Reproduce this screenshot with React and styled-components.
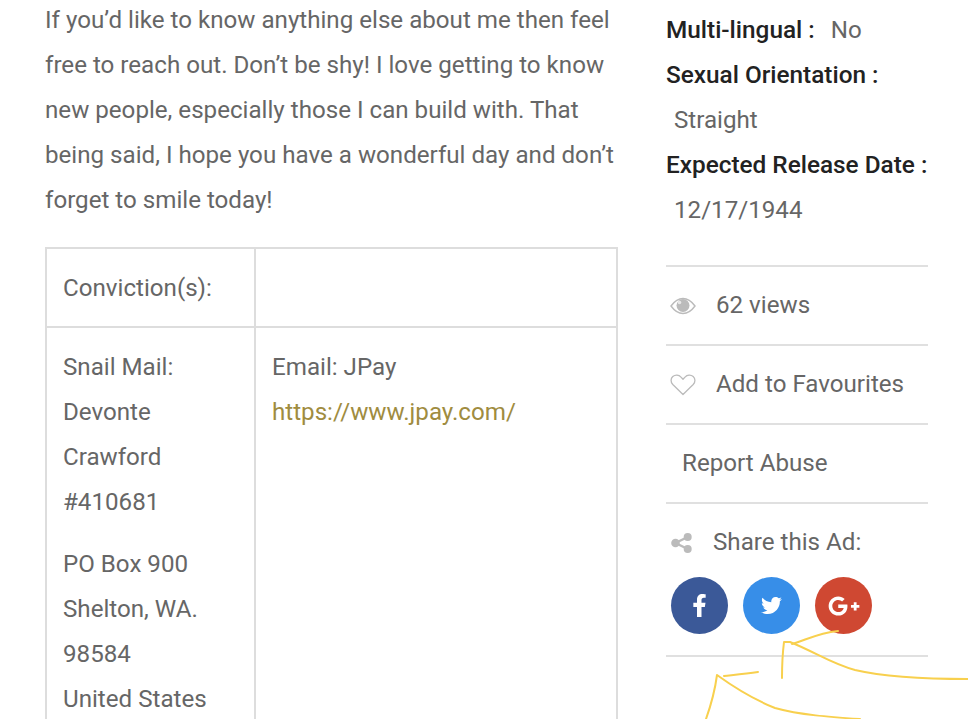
import React from 'react';
import styled, { createGlobalStyle } from 'styled-components';
import { FaFacebookF, FaTwitter, FaGooglePlusG } from 'react-icons/fa';

const GlobalStyle = createGlobalStyle`
  html, body {
    margin: 0;
    padding: 0;
    background: #fff;
    overflow: hidden;
  }
`;

const Page = styled.div`
  position: relative;
  width: 968px;
  height: 719px;
  overflow: hidden;
  display: grid;
  grid-template-columns: 573px 262px;
  column-gap: 48px;
  padding-left: 45px;
  box-sizing: border-box;
  font-family: Roboto, "Liberation Sans", sans-serif;
  font-size: 24.15px;
  line-height: 45px;
  color: #666;
`;

const Main = styled.main`
  margin-top: -2px;
`;

const Intro = styled.p`
  margin: 0 0 24px;
`;

const Table = styled.div`
  display: grid;
  grid-template-columns: 209px 1fr;
  border-top: 2px solid #ddd;
  border-left: 2px solid #ddd;
`;

const Cell = styled.div`
  padding: 17px 16px 15px;
  border-right: 2px solid #ddd;
  border-bottom: 2px solid #ddd;
`;

const Address = styled.p`
  margin: 0 0 17px;
`;

const Link = styled.a`
  color: #a08c3f;
  text-decoration: none;
`;

const Sidebar = styled.aside`
  padding-top: 8px;
`;

const Facts = styled.div`
  padding-bottom: 32px;
`;

const Label = styled.strong`
  color: #222;
  font-size: 24.35px;
  line-height: 1;
  font-weight: 500;
`;

const InlineValue = styled.span`
  margin-left: 16px;
`;

const Value = styled.div`
  padding-left: 8px;
`;

const Row = styled.div`
  display: flex;
  align-items: center;
  height: 77px;
  border-top: 2px solid #e0e0e0;
  padding-left: ${p => p.$inset || 0}px;
`;

const RowIcon = styled.span`
  display: flex;
  justify-content: center;
  width: 34px;
  margin-right: 16px;
  color: #bbb;
`;

const ShareRow = styled(Row)`
  padding-left: 5px;
`;

const ShareIcon = styled.span`
  display: flex;
  width: 22px;
  margin-right: 20px;
`;

const Socials = styled.div`
  display: flex;
  gap: 15px;
  padding-left: 5px;
  margin-top: -4px;
  padding-bottom: 21px;
  border-bottom: 2px solid #e0e0e0;
`;

const Social = styled.a`
  display: flex;
  align-items: center;
  justify-content: center;
  width: 57px;
  height: 57px;
  border-radius: 50%;
  color: #fff;
  background: ${p => p.$color};
  font-size: ${p => p.$size}px;
`;

const Scribble = styled.svg`
  position: absolute;
  left: 0;
  top: 0;
  pointer-events: none;
`;

const EyeIcon = () => (
  <svg width="26" height="18" viewBox="0 0 26 18">
    <path d="M1 9C5 3.5 9 1.5 13 1.5S21 3.5 25 9C21 14.500 17 16.500 13 16.500S5 14.500 1 9Z" fill="none" stroke="#bbb" strokeWidth="1.400" />
    <circle cx="13" cy="8.500" r="6.500" fill="#bbb" />
    <circle cx="9.500" cy="5.500" r="1.800" fill="#e8e8e8" />
  </svg>
);

const HeartIcon = () => (
  <svg width="26" height="22" viewBox="0 0 26 22">
    <path d="M13 20.500L2.800 10.500C0.300 7.900 0.700 4.500 2.800 2.600C5.200 0.500 8.800 0.800 11 3.100L13 5.200L15 3.100C17.200 0.800 20.800 0.500 23.200 2.600C25.300 4.500 25.700 7.900 23.200 10.500Z" fill="none" stroke="#bbb" strokeWidth="1.300" strokeLinejoin="round" />
  </svg>
);

const ShareGlyph = () => (
  <svg width="21" height="20" viewBox="0 0 21 20" fill="#bbb">
    <path d="M16.700 4L4.500 10L16.700 16" fill="none" stroke="#bbb" strokeWidth="2.400" />
    <circle cx="4.500" cy="10" r="4.300" />
    <circle cx="16.700" cy="4" r="4" />
    <circle cx="16.700" cy="16" r="4" />
  </svg>
);

const App = () => (
  <>
    <GlobalStyle />
    <Page>
      <Main>
        <Intro>
          If you’d like to know anything else about me then feel free to reach out. Don’t be shy! I love getting to know new people, especially those I can build with. That being said, I hope you have a wonderful day and don’t forget to smile today!
        </Intro>
        <Table>
          <Cell>Conviction(s):</Cell>
          <Cell />
          <Cell>
            <Address>
              Snail Mail:<br />Devonte<br />Crawford<br />#410681
            </Address>
            <Address>
              PO Box 900<br />Shelton, WA.<br />98584<br />United States
            </Address>
          </Cell>
          <Cell>
            Email: JPay<br />
            <Link href="#">https://www.jpay.com/</Link>
          </Cell>
        </Table>
      </Main>
      <Sidebar>
        <Facts>
          <div><Label>Multi-lingual :</Label><InlineValue>No</InlineValue></div>
          <div><Label>Sexual Orientation :</Label></div>
          <Value>Straight</Value>
          <div><Label>Expected Release Date :</Label></div>
          <Value>12/17/1944</Value>
        </Facts>
        <Row>
          <RowIcon><EyeIcon /></RowIcon>62 views
        </Row>
        <Row>
          <RowIcon><HeartIcon /></RowIcon>Add to Favourites
        </Row>
        <Row $inset={16}>Report Abuse</Row>
        <ShareRow>
          <ShareIcon><ShareGlyph /></ShareIcon>Share this Ad:
        </ShareRow>
        <Socials>
          <Social $color="#3b5998" $size={23}><FaFacebookF /></Social>
          <Social $color="#378ee8" $size={21}><FaTwitter /></Social>
          <Social $color="#cf4832" $size={32}><FaGooglePlusG /></Social>
        </Socials>
      </Sidebar>
      <Scribble width="968" height="719" viewBox="0 0 968 719" fill="none" stroke="#f8d04e" strokeWidth="2" strokeLinecap="round" strokeLinejoin="round">
        <path d="M838 631C818 633 806 640 792 644" />
        <path d="M782 678C782 660 783 650 784 642L790 642C815 652 832 664 855 670C885 677 925 679 968 679" />
        <path d="M758 672C745 674 733 675 724 676" />
        <path d="M706 719C711 705 715 690 717 675C735 688 755 700 775 708C800 715 830 717 860 719" />
      </Scribble>
    </Page>
  </>
);

export default App;
